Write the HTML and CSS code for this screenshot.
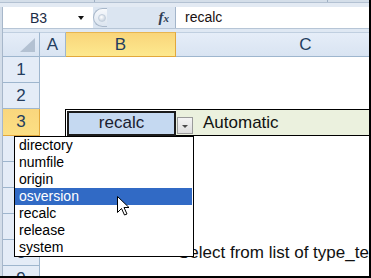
FILE: index.html
```html
<!DOCTYPE html>
<html>
<head>
<meta charset="utf-8">
<link rel="stylesheet" href="styles.css">
</head>
<body>
<div class="frame">
  <div class="ribbon"><span class="rseg rseg1"></span><span class="rseg rseg2"></span></div>
  <div class="body">
    <div class="fbar">
      <div class="namebox"><span class="nb-text">B3</span><span class="nb-arrow"></span></div>
      <div class="fxzone">
        <span class="grip"><span class="dot"></span></span>
        <span class="fx"><i>f</i><span class="fxx">x</span></span>
      </div>
      <div class="finput">recalc</div>
    </div>
    <div class="gap"></div>
    <div class="sheet">
      <div class="hd corner"><span class="tri"></span></div>
      <div class="hd">A</div>
      <div class="hd sel">B</div>
      <div class="hd">C</div>

      <div class="rh">1</div><div class="cell"></div><div class="cell"></div><div class="cell"></div>
      <div class="rh">2</div><div class="cell"></div><div class="cell"></div><div class="cell"></div>
      <div class="rh sel">3</div><div class="cell"></div>
      <div class="cell b3"><div class="active">recalc</div></div>
      <div class="cell c3">Automatic</div>
      <div class="rh">4</div><div class="cell"></div><div class="cell"></div><div class="cell"></div>
      <div class="rh">5</div><div class="cell"></div><div class="cell"></div><div class="cell"></div>
      <div class="rh">6</div><div class="cell"></div><div class="cell"></div><div class="cell"></div>
      <div class="rh">7</div><div class="cell"></div><div class="cell"></div><div class="cell"></div>
      <div class="rh">8</div><div class="cell"></div><div class="cell"></div><div class="cell c8">Select from list of type_text</div>
      <div class="rh">9</div><div class="cell"></div><div class="cell"></div><div class="cell"></div>
    </div>
  </div>

  <div class="ddbtn"><span class="ddtri"></span></div>

  <ul class="dlist">
    <li>directory</li>
    <li>numfile</li>
    <li>origin</li>
    <li class="hi">osversion</li>
    <li>recalc</li>
    <li>release</li>
    <li>system</li>
  </ul>

  <svg class="cursor" width="13" height="20" viewBox="0 0 13 20">
    <path d="M0.5 0.5 L0.5 16.5 L4.5 12.5 L7.5 19 L10 18 L7 11.5 L12 11.5 Z" fill="#fff" stroke="#000" stroke-width="1" stroke-linejoin="miter"/>
  </svg>
</div>
</body>
</html>
```

FILE: styles.css
```css
html, body {
  margin: 0;
  padding: 0;
  background: #fff;
}

.frame {
  position: relative;
  width: 371px;
  height: 278px;
  box-sizing: border-box;
  border-right: 2px solid #000;
  border-bottom: 2px solid #000;
  overflow: hidden;
  background: #fff;
  display: flex;
  flex-direction: column;
  font-family: "Liberation Sans", Arial, sans-serif;
}

.ribbon {
  flex: none;
  height: 7px;
  display: flex;
  background: linear-gradient(#d4dee9 0 2px, #b3c1d2 2px 3px, #e3eaf3 3px);
}

.rseg {
  height: 2px;
  border-right: 1px solid #9fb0c4;
}

.rseg1 { width: 94px; }
.rseg2 { width: 232px; }

.body {
  flex: 1;
  display: flex;
  flex-direction: column;
  padding-left: 3px;
  background: linear-gradient(to right, #d3dde9 0 2px, #a7b7ca 2px 3px, #fff 3px);
}

.fbar {
  flex: none;
  height: 21px;
  display: flex;
  background: #dfe8f3;
}

.namebox {
  width: 90px;
  background: #fff;
  display: flex;
  align-items: center;
  box-sizing: border-box;
  padding-left: 27px;
  font-size: 14px;
  color: #1b2b45;
}

.nb-text {
  width: 48px;
}

.nb-arrow {
  width: 0;
  height: 0;
  border-left: 3.5px solid transparent;
  border-right: 3.5px solid transparent;
  border-top: 4px solid #111;
}

.fxzone {
  width: 83px;
  display: flex;
  align-items: center;
  background: #dbe5f1;
  box-sizing: border-box;
  border-right: 1px solid #a3b5ca;
}

.grip {
  width: 14px;
  height: 19px;
  box-sizing: border-box;
  border: 1px solid #a9b8ca;
  border-right: none;
  border-radius: 10px 0 0 10px;
  background: linear-gradient(#f7f9fc, #dbe4ef);
  display: flex;
  align-items: center;
  padding-left: 4px;
}

.dot {
  width: 6px;
  height: 6px;
  border-radius: 50%;
  background: radial-gradient(circle at 40% 35%, #ffffff, #b9c6d6);
  border: 1px solid #c3cfdd;
}

.fx {
  margin-left: auto;
  margin-right: 6px;
  font-family: "Liberation Serif", "Times New Roman", serif;
  font-weight: bold;
  font-size: 15px;
  color: #2f3e55;
  line-height: 1;
}

.fxx {
  font-style: italic;
  font-size: 11px;
}

.finput {
  flex: 1;
  background: #fff;
  padding-left: 9px;
  font-size: 14px;
  line-height: 21px;
  color: #1a1010;
}

.gap {
  flex: none;
  height: 4px;
  box-sizing: border-box;
  background: #dfe8f3;
  border-top: 1px solid #b6c5d6;
}

.sheet {
  flex: none;
  display: grid;
  grid-template-columns: 37px 26px 110px 260px;
  grid-template-rows: 25px 26px 26px 27px repeat(6, 26px);
  font-size: 17px;
}

.hd {
  box-sizing: border-box;
  background: linear-gradient(#e5edf8, #d9e4f2);
  border-top: 1px solid #c0cfe0;
  border-right: 1px solid #9eb6ce;
  border-bottom: 1px solid #9eb6ce;
  display: flex;
  align-items: center;
  justify-content: center;
  color: #243d5e;
  padding-top: 1px;
}

.hd.sel {
  background: linear-gradient(#f9d57a, #fde98f);
  border-right-color: #e2a83c;
  border-bottom-color: #e2a83c;
  border-top-color: #e7b550;
}

.corner {
  position: relative;
}

.tri {
  position: absolute;
  right: 4px;
  bottom: 4px;
  width: 0;
  height: 0;
  border-left: 15px solid transparent;
  border-bottom: 14px solid #b3c1d2;
}

.rh {
  box-sizing: border-box;
  background: #e4ecf7;
  border-right: 1px solid #9eb6ce;
  border-bottom: 1px solid #9eb6ce;
  display: flex;
  align-items: center;
  justify-content: center;
  color: #243d5e;
}

.rh.sel {
  background: linear-gradient(#f9d67d, #fcdf84);
  border-bottom-color: #e2a83c;
  border-right-color: #e2a83c;
}

.cell {
  background: #fff;
  min-width: 0;
  overflow: hidden;
  white-space: nowrap;
}

.b3 {
  box-sizing: border-box;
  margin-left: -1px;
  border-top: 1px solid #000;
  border-left: 1px solid #000;
  padding: 1px 0 0 1px;
  display: flex;
}

.active {
  flex: 1;
  box-sizing: border-box;
  border: 2px solid #1c1c1c;
  background: #c5d9f1;
  display: flex;
  align-items: center;
  justify-content: center;
  color: #1a2030;
  padding-bottom: 1px;
}

.c3 {
  box-sizing: border-box;
  background: #ebf1de;
  border-top: 1px solid #000;
  border-bottom: 1px solid #000;
  padding-left: 27px;
  display: flex;
  align-items: center;
  color: #111;
}

.c8 {
  padding-left: 2px;
  display: flex;
  align-items: center;
  color: #111;
  overflow: visible;
}

.ddbtn {
  position: absolute;
  left: 177px;
  top: 117px;
  width: 16px;
  height: 17px;
  box-sizing: border-box;
  border: 1px solid #9a9a9a;
  background: linear-gradient(#f4f4f4, #dedede);
  display: flex;
  align-items: center;
  justify-content: center;
}

.ddtri {
  width: 0;
  height: 0;
  border-left: 3px solid transparent;
  border-right: 3px solid transparent;
  border-top: 3px solid #4a4a4a;
  margin-top: 1px;
}

.dlist {
  position: absolute;
  left: 14px;
  top: 136px;
  width: 180px;
  box-sizing: border-box;
  margin: 0;
  padding: 0 1px 0 0;
  list-style: none;
  background: #fff;
  border: 1px solid #000;
  font-size: 14px;
  color: #000;
}

.dlist li {
  height: 17px;
  line-height: 17px;
  padding-left: 4px;
}

.dlist li.hi {
  background: #316ac5;
  color: #fff;
}

.cursor {
  position: absolute;
  left: 117px;
  top: 196px;
}
```
